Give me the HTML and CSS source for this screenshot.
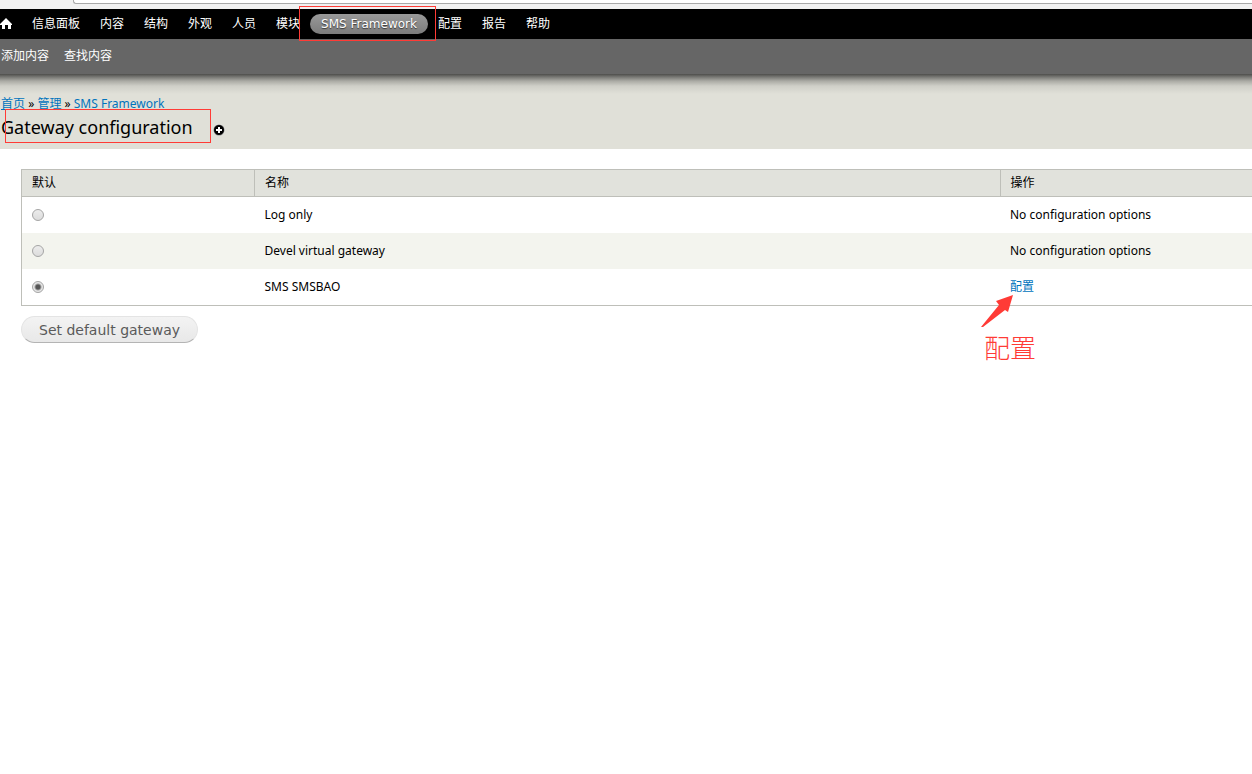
FILE: index.html
```html
<!DOCTYPE html>
<html lang="zh-CN">
<head>
  <meta charset="utf-8">
  <title>Gateway configuration</title>
  <link rel="stylesheet" href="styles.css">
</head>
<body>
  <div class="browser-edge">
    <div class="address-bar"></div>
  </div>

  <div class="toolbar">
    <nav class="toolbar-menu">
      <a href="#" class="home" aria-label="首页">
        <svg width="12" height="12" viewBox="0 0 12 12"><path d="M6 0L12 6V7H11V11H8V7H5V11H2V7H0V6Z" fill="#fff"/></svg>
      </a>
      <a href="#">信息面板</a>
      <a href="#">内容</a>
      <a href="#">结构</a>
      <a href="#">外观</a>
      <a href="#">人员</a>
      <a href="#">模块</a>
      <span class="marked">
        <a href="#" class="active">SMS Framework</a>
        <span class="mark mark-menu"></span>
      </span>
      <a href="#">配置</a>
      <a href="#">报告</a>
      <a href="#">帮助</a>
    </nav>
    <nav class="toolbar-drawer">
      <a href="#">添加内容</a>
      <a href="#">查找内容</a>
    </nav>
  </div>

  <header class="branding">
    <div class="breadcrumb"><a href="#">首页</a> » <a href="#">管理</a> » <a href="#">SMS Framework</a></div>
    <div class="title-row">
      <h1>Gateway configuration</h1>
      <a href="#" class="shortcut" aria-label="添加">
        <svg width="12" height="12" viewBox="0 0 12 12"><circle cx="6" cy="6" r="5.500" fill="#000" stroke="#fff" stroke-opacity=".5"/><path d="M5 3H7V5H9V7H7V9H5V7H3V5H5Z" fill="#fff"/></svg>
      </a>
      <span class="mark mark-title"></span>
    </div>
  </header>

  <form class="content">
    <table>
      <colgroup>
        <col class="col-default">
        <col>
        <col class="col-action">
      </colgroup>
      <thead>
        <tr><th>默认</th><th>名称</th><th>操作</th></tr>
      </thead>
      <tbody>
        <tr>
          <td><input type="radio" name="gateway" id="gateway-log"></td>
          <td><label for="gateway-log">Log only</label></td>
          <td>No configuration options</td>
        </tr>
        <tr class="even">
          <td><input type="radio" name="gateway" id="gateway-devel"></td>
          <td><label for="gateway-devel">Devel virtual gateway</label></td>
          <td>No configuration options</td>
        </tr>
        <tr>
          <td><input type="radio" name="gateway" id="gateway-smsbao" checked></td>
          <td><label for="gateway-smsbao">SMS SMSBAO</label></td>
          <td>
            <span class="marked">
              <a href="#">配置</a>
              <span class="note">
                <svg width="34" height="34" viewBox="0 0 34 34"><path d="M33 0L16 6L19 10L1 32L3 32L25 15L28 17Z" fill="#ff3b36"/></svg>
                <span class="note-text">配置</span>
              </span>
            </span>
          </td>
        </tr>
      </tbody>
    </table>
    <button type="submit">Set default gateway</button>
  </form>
</body>
</html>
```
FILE: styles.css
```css
body {
  margin: 0;
  background-color: #fff;
  color: #000;
  font-family: "Noto Sans", "Noto Sans CJK SC", sans-serif;
  font-size: 12px;
  line-height: 16px;
  overflow-x: hidden;
}

a {
  color: #0074bd;
  text-decoration: none;
}

svg {
  display: block;
}

.browser-edge {
  height: 9px;
  background-color: #f1f1f1;
}

.address-bar {
  height: 3px;
  margin-left: 73px;
  background-color: #fff;
  border-left: 1px solid #a9a9a9;
  border-bottom: 1px solid #a9a9a9;
  border-bottom-left-radius: 3px;
}

/* Toolbar */
.toolbar a {
  color: #fff;
}

.toolbar-menu {
  display: flex;
  align-items: center;
  height: 30px;
  background-color: #000;
}

.toolbar-menu a {
  padding: 2px 10px;
}

.toolbar-menu .home {
  padding-left: 0;
}

.toolbar-menu .active {
  display: block;
  padding: 2px 11px;
  border-radius: 10px;
  background: linear-gradient(#999, #7c7c7c);
  font-family: "DejaVu Sans", sans-serif;
  text-shadow: 0 1px 1px #333;
}

.toolbar-drawer {
  display: flex;
  gap: 15px;
  height: 26px;
  padding: 9px 0 0 1px;
  background-color: #666;
}

/* Red marks over the page */
.marked {
  position: relative;
}

.mark {
  position: absolute;
  border: 1px solid #ff3b36;
  pointer-events: none;
}

.mark-menu {
  top: -8px;
  right: -8px;
  bottom: -7px;
  left: -11px;
}

.mark-title {
  top: -4px;
  left: 4px;
  width: 204px;
  height: 32px;
}

/* Page header, the toolbar shadow falls on its top */
.branding {
  padding: 22px 0 8px 1px;
  background: linear-gradient(#4d4d4b, #787874 3px, #aaaaa4 7px, #cfcfc8 12px, #e0e0d8 20px);
}

.breadcrumb a {
  text-decoration: underline;
  text-decoration-skip-ink: none;
}

.title-row {
  position: relative;
  display: flex;
  align-items: center;
  gap: 20px;
  margin-top: 1px;
}

h1 {
  margin: 0;
  font-size: 18px;
  font-weight: normal;
  line-height: 28px;
}

.shortcut {
  padding-top: 6px;
}

/* Gateway table */
.content {
  padding: 20px 0 20px 21px;
}

table {
  width: 100%;
  table-layout: fixed;
  border-collapse: collapse;
  border: 1px solid #bebfb9;
  border-right: 0;
}

.col-default {
  width: 233px;
}

.col-action {
  width: 252px;
}

th {
  padding: 5px 10px;
  background-color: #e1e2dc;
  border: 1px solid #bebfb9;
  border-right: 0;
  font-weight: normal;
  text-align: left;
}

td {
  height: 16px;
  padding: 10px;
}

.even {
  background-color: #f3f4ee;
}

input[type="radio"] {
  appearance: none;
  display: block;
  width: 12px;
  height: 12px;
  margin: 1px 0;
  border: 1px solid #a5a5a5;
  border-radius: 50%;
  background: linear-gradient(#ececec, #dcdcdc);
}

input[type="radio"]:checked {
  background: radial-gradient(circle, #555 2px, #e6e6e6 4px);
}

.note {
  position: absolute;
  top: 17px;
  left: -30px;
  color: #ff3b36;
  font-family: "Noto Sans CJK SC", sans-serif;
  font-size: 26px;
  font-weight: 300;
  line-height: 36px;
  white-space: nowrap;
}

.note-text {
  padding-left: 4px;
}

button {
  display: block;
  height: 27px;
  margin-top: 10px;
  padding: 0 17px;
  border: 1px solid #e4e4e4;
  border-bottom-color: #b4b4b4;
  border-radius: 14px;
  background: linear-gradient(#f3f3f3, #e8e8e8);
  color: #5a5a5a;
  font-family: "DejaVu Sans", sans-serif;
  font-size: 14px;
  cursor: pointer;
}
```
